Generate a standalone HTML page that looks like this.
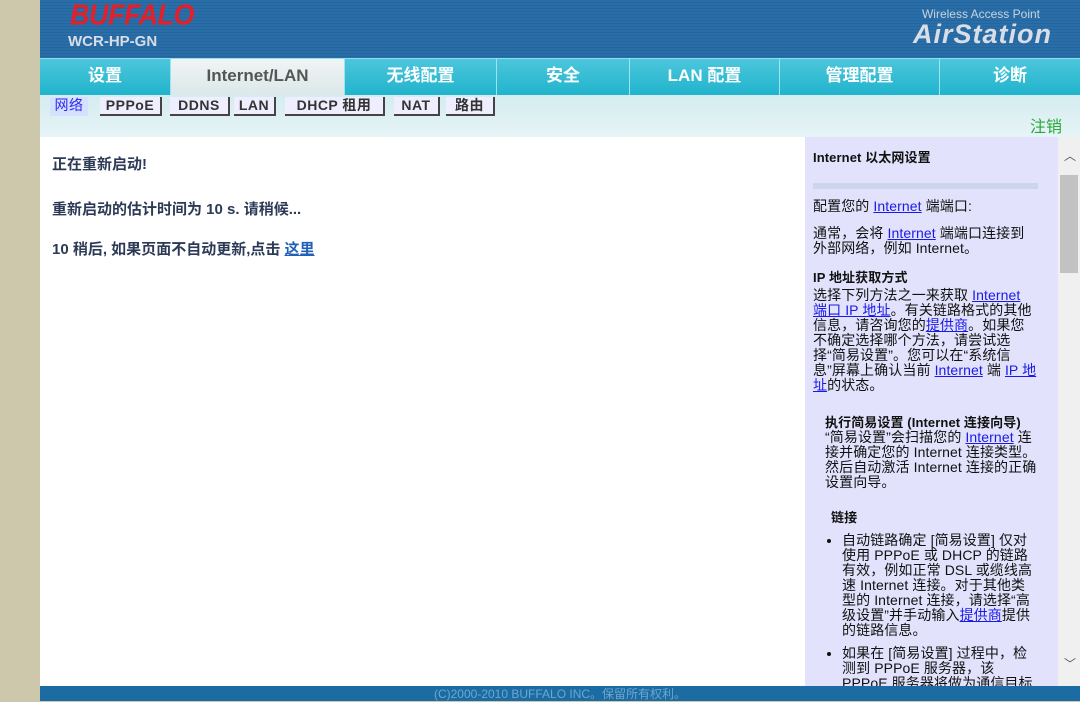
<!DOCTYPE html>
<html><head><meta charset="utf-8"><style>
*{margin:0;padding:0;box-sizing:border-box}
body{width:1080px;height:701px;overflow:hidden;background:#cdc7ab;font-family:"Liberation Sans","Noto Sans CJK SC",sans-serif;position:relative}
.pg{position:absolute;left:40px;top:0;width:1040px;height:701px;background:#fff}
.hdr{position:absolute;left:0;top:0;width:1040px;height:58px;background-image:repeating-linear-gradient(#2a6ea7 0 2px,#2566a0 2px 3px)}
.logo{position:absolute;left:30px;top:0;font:italic 900 27px "Liberation Sans",sans-serif;color:#e0202a;letter-spacing:-0.5px;transform:scaleY(1.05)}
.model{position:absolute;left:28px;top:33px;font:bold 15px "Liberation Sans",sans-serif;color:#d9dde6}
.wap{position:absolute;right:40px;top:7px;font:12px "Liberation Sans",sans-serif;color:#c8d4e0}
.air{position:absolute;right:28px;top:19px;font:italic bold 27px "Liberation Sans",sans-serif;color:#d8dde6;letter-spacing:1px}
.nav{position:absolute;left:0;top:58px;width:1040px;height:37px;background:linear-gradient(#4cc6dc,#20b4cc);border-top:1px solid #8fe0ee}
.nav div{position:absolute;top:0;height:36px;line-height:34px;text-align:center;color:#fff;font-weight:bold;font-size:17px;border-right:1px solid #9ee4f0}
.nav .act{background:linear-gradient(#f0f4f4,#dce8ea);color:#555}
.sub{position:absolute;left:0;top:95px;width:1040px;height:42px;background:linear-gradient(#d4ecf0,#e6f4f6)}
.sub span{position:absolute;top:2px;height:19px;font-weight:bold;font-size:14px;color:#333;border-right:2px solid #444;border-bottom:2px solid #444;background:#eef;line-height:17px;text-align:center;letter-spacing:0.5px}
.logout{position:absolute;right:18px;top:18px;color:#28a83a;font-size:16px}
.main{position:absolute;left:12px;top:156px;font-weight:bold;font-size:15px;color:#2c3a56;line-height:18px}
.main p{position:absolute;white-space:nowrap}
.main a{color:#2160b8}
.help{position:absolute;left:765px;top:137px;width:253px;height:549px;background:#e2e2fc;overflow:hidden;font-size:14px;color:#111;line-height:15px;padding:13px 20px 0 8px;letter-spacing:0.1px}
.help a{color:#1a1ae8;text-decoration:underline}
.help h4{font-size:13px;margin:0}
.sb{position:absolute;left:1018px;top:137px;width:22px;height:549px;background:#f0f0f0}
.ft{position:absolute;left:0;top:686px;width:1040px;height:15px;background:#1c6ca4;color:#6ea6ce;font-size:12px;text-align:center;line-height:16px}
</style></head><body><div class="pg">
<div class="hdr"><div class="logo">BUFFALO</div><div class="model">WCR-HP-GN</div><div class="wap">Wireless Access Point</div><div class="air">AirStation</div></div>
<div class="nav">
<div style="left:0;width:131px">设置</div>
<div class="act" style="left:131px;width:174px">Internet/LAN</div>
<div style="left:305px;width:152px">无线配置</div>
<div style="left:457px;width:133px">安全</div>
<div style="left:590px;width:150px">LAN 配置</div>
<div style="left:740px;width:160px">管理配置</div>
<div style="left:900px;width:140px;border:none">诊断</div>
</div>
<div class="sub">
<span style="left:10px;width:38px;color:#2a2aee;border:none;background:#d8e0ff;font-weight:normal">网络</span>
<span style="left:60px;width:62px">PPPoE</span>
<span style="left:130px;width:60px">DDNS</span>
<span style="left:194px;width:42px">LAN</span>
<span style="left:245px;width:100px">DHCP 租用</span>
<span style="left:354px;width:46px">NAT</span>
<span style="left:406px;width:49px">路由</span>
<div class="logout">注销</div>
</div>
<div class="main">
<p style="top:0">正在重新启动!</p>
<p style="top:45px">重新启动的估计时间为 10 s. 请稍候...</p>
<p style="top:85px">10 稍后, 如果页面不自动更新,点击 <a href="#">这里</a></p>
</div>
<div class="help">
<h4>Internet 以太网设置</h4>
<div style="height:6px;background:#cbd6ee;margin:18px 0 10px"></div>
<p>配置您的 <a>Internet</a> 端端口:</p>
<p style="margin-top:12px">通常，会将 <a>Internet</a> 端端口连接到外部网络，例如 Internet。</p>
<h4 style="margin-top:14px;margin-bottom:3px">IP 地址获取方式</h4>
<p>选择下列方法之一来获取 <a>Internet 端口 IP 地址</a>。有关链路格式的其他信息，请咨询您的<a>提供商</a>。如果您不确定选择哪个方法，请尝试选择“简易设置”。您可以在“系统信息”屏幕上确认当前 <a>Internet</a> 端 <a>IP 地址</a>的状态。</p>
<div style="padding-left:12px">
<h4 style="margin-top:22px">执行简易设置 (Internet 连接向导)</h4>
<p>“简易设置”会扫描您的 <a>Internet</a> 连接并确定您的 Internet 连接类型。然后自动激活 Internet 连接的正确设置向导。</p>
<h4 style="margin:20px 0 8px 6px">链接</h4>
<ul style="padding-left:17px"><li>自动链路确定 [简易设置] 仅对使用 PPPoE 或 DHCP 的链路有效，例如正常 DSL 或缆线高速 Internet 连接。对于其他类型的 Internet 连接，请选择“高级设置”并手动输入<a>提供商</a>提供的链路信息。</li>
<li style="margin-top:8px">如果在 [简易设置] 过程中，检测到 PPPoE 服务器，该 PPPoE 服务器将做为通信目标</li></ul>
</div></div>
<div class="sb"><div style="position:absolute;top:10px;left:6px;font-size:12px;color:#555">︿</div><div style="position:absolute;left:2px;top:38px;width:18px;height:98px;background:#c2c2c2"></div><div style="position:absolute;bottom:14px;left:6px;font-size:12px;color:#555">﹀</div></div>
<div class="ft">(C)2000-2010 BUFFALO INC。保留所有权利。</div>
</div></body></html>
